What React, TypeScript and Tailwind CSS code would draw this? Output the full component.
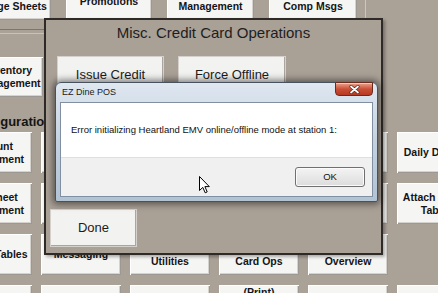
type TileProps = {
  label?: string;
  width?: string;
  shift?: string;
  hidden?: boolean;
};

// raised button of the POS back office screen
function Tile({ label = "", width = "w-[80px]", shift = "", hidden = false }: TileProps) {
  if (hidden) return <div className={`${width} h-full shrink-0`} />;
  return (
    <div
      className={`${width} h-full shrink-0 flex items-center justify-center text-center whitespace-pre-line bg-[#f5f5f4] shadow-[inset_1px_1px_0_#ffffff,inset_-1px_-1px_0_#9c9894,inset_-2px_-2px_0_#d6d3cf] text-[10.5px] font-bold leading-[13px] text-[#141414]`}
    >
      <span className={shift}>{label}</span>
    </div>
  );
}

const rows: TileProps[][] = [
  [{ label: "Account\nManagement" }, {}, {}, {}, {}, { label: "Daily Deposit" }],
  [{ label: "Timesheet\nManagement" }, {}, {}, {}, {}, { label: "Attach Server\nTables" }],
  [
    { label: "Pricing Tables" },
    { label: "Messaging" },
    { label: "Utilities", shift: "pt-[13px]" },
    { label: "Card Ops", shift: "pt-[13px]" },
    { label: "Overview", shift: "pt-[13px]" },
    { hidden: true },
  ],
  [{}, {}, {}, { label: "(Print)", shift: "self-start pt-[1px]" }, {}, {}],
];

function DialogButton({ label, width }: { label: string; width: string }) {
  return (
    <div
      className={`${width} h-[38px] shrink-0 flex items-center justify-center bg-[#f2f2f1] border border-[#d4d1cd] shadow-[inset_-1px_-1px_0_#a9a5a0] text-[13px] text-[#1c1c1c]`}
    >
      {label}
    </div>
  );
}

export default function App() {
  return (
    <div className="relative w-[438px] h-[293px] overflow-hidden bg-[#aaa197] font-['Liberation_Sans',Arial,sans-serif]">
      {/* back office screen */}
      <div className="flex flex-col">
        <div className="flex gap-[15px] ml-[-26px] mt-[-20px] h-[40px]">
          <Tile label="Usage Sheets" width="w-[77px]" shift="pt-[13px]" />
          <Tile label="Promotions" width="w-[86px]" shift="pt-[2px]" />
          <Tile label="Management" width="w-[87px]" shift="pt-[13px]" />
          <Tile label="Comp Msgs" width="w-[88px]" shift="pt-[13px]" />
          <div className="w-px h-full bg-[#cdc6bd] ml-[-7px]" />
        </div>
        <div className="w-[365px] h-px mt-[9px] bg-[#7d746a]" />
        <div className="w-[365px] h-px mt-[3px] bg-[#c9c2b8]" />
        <div className="flex mt-[23px] h-[40px] ml-[-26px]">
          <Tile label={"Inventory\nManagement"} width="w-[69px]" />
        </div>
        <div className="h-[35px] flex items-end pb-[4px] ml-[-33px] text-[13px] leading-[13px] font-bold text-[#141414]">
          Configuration
        </div>
        <div className="flex flex-col gap-[10px]">
          {rows.map((row, i) => (
            <div key={i} className="flex gap-[9px] ml-[-48px] h-[41px]">
              {row.map((t, j) => (
                <Tile key={j} label={t.label} shift={t.shift} hidden={t.hidden} />
              ))}
            </div>
          ))}
        </div>
      </div>

      {/* Misc. Credit Card Operations window */}
      <div className="absolute left-[44px] top-[18px] w-[339px] h-[237px] flex flex-col border-2 border-[#2e2a27] bg-[#a9a096] shadow-[2px_2px_3px_rgba(0,0,0,0.3)]">
        <div className="mt-[4px] text-center text-[15px] leading-[18px] text-[#1e1e1e]">
          Misc. Credit Card Operations
        </div>
        <div className="flex gap-[14px] mt-[14px] pl-[11px]">
          <DialogButton label="Issue Credit" width="w-[107px]" />
          <DialogButton label="Force Offline" width="w-[108px]" />
        </div>
        <div className="mt-auto mb-[6px] ml-[4px]">
          <DialogButton label="Done" width="w-[87px]" />
        </div>
      </div>

      {/* EZ Dine POS message box */}
      <div className="absolute left-[55px] top-[82px] w-[323px] h-[120px] flex flex-col px-[4px] pb-[4px] rounded-t-[6px] rounded-b-[2px] border border-[#48525e] bg-gradient-to-b from-[#dfe7f0] via-[#c4d2e0] to-[#b2c3d4] shadow-[0_0_7px_2px_rgba(0,0,0,0.5)]">
        <div className="h-[19px] shrink-0 flex items-center pl-[2px] text-[9px] text-[#1a1a1a]">EZ Dine POS</div>
        <div className="absolute right-[4px] top-[-1px] w-[38px] h-[14px] flex items-center justify-center rounded-b-[4px] border border-[#6a2b1f] bg-gradient-to-b from-[#e7a28f] via-[#cc4f34] to-[#b53a22] shadow-[inset_0_1px_0_rgba(255,255,255,0.45)]">
          <svg width="11" height="9" viewBox="0 0 11 9">
            <path d="M2 1.5 L9 7.5 M9 1.5 L2 7.5" stroke="#5a2a22" strokeWidth="3.2" strokeLinecap="round" />
            <path d="M2 1.5 L9 7.5 M9 1.5 L2 7.5" stroke="#ffffff" strokeWidth="1.7" strokeLinecap="round" />
          </svg>
        </div>
        <div className="flex-1 flex flex-col border border-[#8090a2] bg-white">
          <div className="h-[54px] shrink-0 flex items-center pl-[10px] text-[9.5px] text-[#111]">
            Error initializing Heartland EMV online/offline mode at station 1:
          </div>
          <div className="flex-1 flex items-center justify-end pr-[7px] bg-[#f0f0f0] border-t border-[#dfdfdf]">
            <div className="w-[70px] h-[20px] flex items-center justify-center rounded-[3px] border border-[#707070] bg-gradient-to-b from-[#f4f4f4] to-[#dcdcdc] shadow-[inset_0_0_0_1px_#fbfbfb] text-[9.5px] text-[#111]">
              OK
            </div>
          </div>
        </div>
      </div>

      {/* mouse pointer */}
      <svg className="absolute left-[199px] top-[176px]" width="12" height="18" viewBox="0 0 12 18">
        <path d="M0.5 0.5 L0.5 14.5 L3.8 11.4 L6.2 16.8 L8.2 15.9 L5.9 10.6 L10.3 10.6 Z" fill="#ffffff" stroke="#000000" strokeWidth="1" strokeLinejoin="round" />
      </svg>
    </div>
  );
}
